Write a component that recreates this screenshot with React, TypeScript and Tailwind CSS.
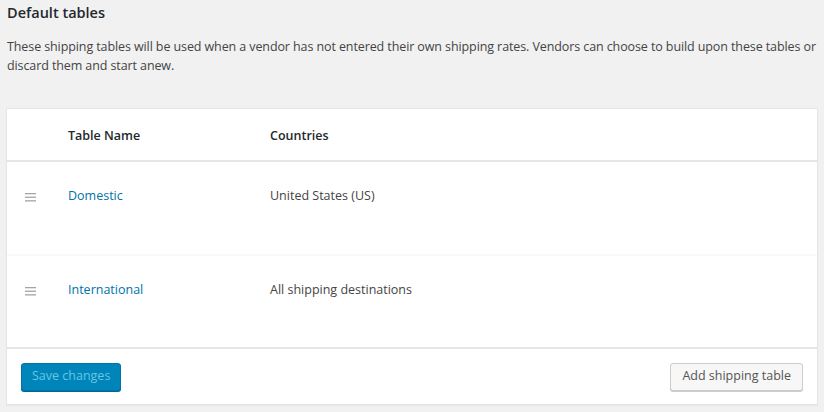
import React from 'react';

const font = { fontFamily: '"Open Sans", "Noto Sans", sans-serif' };

function DragHandle() {
  return (
    <svg width="11" height="9" viewBox="0 0 11 9" className="text-[#a0a5aa]">
      <rect x="0" y="0" width="11" height="1.3" fill="currentColor" />
      <rect x="0" y="3.6" width="11" height="1.3" fill="currentColor" />
      <rect x="0" y="7.2" width="11" height="1.3" fill="currentColor" />
    </svg>
  );
}

const rows = [
  { name: 'Domestic', countries: 'United States (US)' },
  { name: 'International', countries: 'All shipping destinations' },
];

export default function App() {
  return (
    <div className="w-[824px] h-[412px] bg-[#f1f1f1] text-[#444] overflow-hidden" style={font}>
      <div className="px-[7px] pt-[3px]">
        <h2 className="text-[14.5px] font-semibold text-[#23282d] leading-[20px]">Default tables</h2>
        <p className="mt-[14px] text-[12.5px] leading-[19px] text-[#444] tracking-[-0.1px]">
          These shipping tables will be used when a vendor has not entered their own shipping rates. Vendors can choose to build upon these tables or discard them and start anew.
        </p>
      </div>

      <div className="mt-[33px] ml-[6px] w-[812px] bg-white border border-[#e5e5e5] shadow-[0_1px_1px_rgba(0,0,0,0.04)]">
        {/* header */}
        <div className="flex items-center h-[53px] pt-[3px] border-b-2 border-[#e5e5e5] text-[12.5px] font-semibold text-[#23282d]">
          <div className="w-[61px]" />
          <div className="w-[202px]">Table Name</div>
          <div>Countries</div>
        </div>

        {rows.map((r, i) => (
          <div
            key={r.name}
            className={`flex items-start pt-[25px] text-[12.5px] ${i === 0 ? 'h-[94px] border-b-2 border-[#f9f9f9]' : 'h-[91px]'}`}
          >
            <div className="w-[61px] pl-[18px] pt-[6px]">
              <DragHandle />
            </div>
            <div className="w-[202px] text-[#0073aa]">{r.name}</div>
            <div className="text-[#444]">{r.countries}</div>
          </div>
        ))}

        {/* footer */}
        <div className="flex items-center justify-between h-[57px] border-t-2 border-[#e5e5e5] pl-[14px] pr-[14px]">
          <button className="h-[28px] px-[10px] rounded-[3px] bg-[#0085ba] border border-[#0073aa] text-[12.5px] text-[#66c6e4] shadow-[0_1px_0_#006799]">
            Save changes
          </button>
          <button className="h-[28px] px-[11px] rounded-[3px] bg-[#f7f7f7] border border-[#cccccc] text-[12.5px] text-[#555] shadow-[0_1px_0_#cccccc]">
            Add shipping table
          </button>
        </div>
      </div>
    </div>
  );
}
